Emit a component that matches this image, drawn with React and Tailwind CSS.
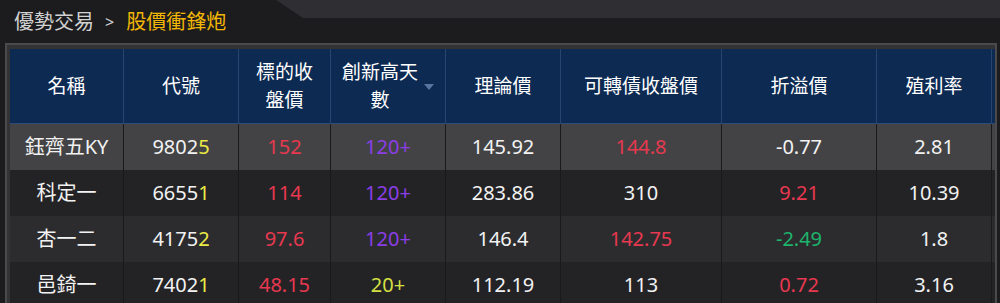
const FONT = "font-['Noto_Sans','Noto_Sans_CJK_TC',sans-serif]"

const cols = 'grid grid-cols-[114px_115px_92px_115px_115px_161px_155px_115px_3px]'

const headers = [
  { label: '名稱' },
  { label: '代號' },
  { label: '標的收盤價', lines: ['標的收', '盤價'] },
  { label: '創新高天數', lines: ['創新高天', '數'], sort: true },
  { label: '理論價' },
  { label: '可轉債收盤價' },
  { label: '折溢價' },
  { label: '殖利率' },
]

const RED = 'text-[#e8384f]'
const PURPLE = 'text-[#8b3ee6]'
const GREEN = 'text-[#1db46c]'
const YELLOW = 'text-[#ecea45]'
const WHITE = 'text-[#f2f2f2]'

const rows = [
  {
    bg: 'bg-[#434345]',
    name: '鈺齊五KY', code: '9802', codeEnd: '5',
    close: ['152', RED], days: ['120+', PURPLE], theo: '145.92',
    cb: ['144.8', RED], prem: ['-0.77', WHITE], yld: '2.81',
  },
  {
    bg: 'bg-[#232326]',
    name: '科定一', code: '6655', codeEnd: '1',
    close: ['114', RED], days: ['120+', PURPLE], theo: '283.86',
    cb: ['310', WHITE], prem: ['9.21', RED], yld: '10.39',
  },
  {
    bg: 'bg-[#2c2c2f]',
    name: '杏一二', code: '4175', codeEnd: '2',
    close: ['97.6', RED], days: ['120+', PURPLE], theo: '146.4',
    cb: ['142.75', RED], prem: ['-2.49', GREEN], yld: '1.8',
  },
  {
    bg: 'bg-[#232326]',
    name: '邑錡一', code: '7402', codeEnd: '1',
    close: ['48.15', RED], days: ['20+', 'text-[#d6e043]'], theo: '112.19',
    cb: ['113', WHITE], prem: ['0.72', RED], yld: '3.16',
  },
]

function HeaderCell({ h }) {
  return (
    <div className="h-[74px] border-r border-[#26456f] flex items-center justify-center gap-[6px] text-[19px] leading-[28px] text-white">
      {h.lines ? (
        <div className="flex flex-col items-center">
          {h.lines.map(l => <span key={l}>{l}</span>)}
        </div>
      ) : (
        <span>{h.label}</span>
      )}
      {h.sort && (
        <svg width="10" height="6" viewBox="0 0 10 6" className="mt-[2px]">
          <path d="M0 0H10L5 6Z" fill="#56759f" />
        </svg>
      )}
    </div>
  )
}

function Cell({ children, className = '' }) {
  return (
    <div className={`h-[46px] border-r border-[#19191b] flex items-center justify-center text-[20px] ${className}`}>
      {children}
    </div>
  )
}

export default function App() {
  return (
    <div className={`relative w-[1000px] h-[303px] overflow-hidden bg-[#1c1c1e] ${FONT}`}>
      {/* top tab decoration */}
      <div className="absolute top-0 left-[276px] w-[724px] h-[18px] bg-[#2e2e33] [clip-path:polygon(0_0,100%_0,100%_100%,27px_100%)]" />

      {/* breadcrumb */}
      <div className="relative h-[43px] flex items-center pl-[14px] text-[20px]">
        <span className="text-[#d2d2d2]">優勢交易</span>
        <span className="text-[#d2d2d2] ml-[11px] mr-[12px] text-[16px]">&gt;</span>
        <span className="text-[#f2b705]">股價衝鋒炮</span>
      </div>

      {/* table frame */}
      <div className="ml-[5px] mr-[3px] border-t-[2px] border-l-[2px] border-r-[2px] border-[#4a4a4c] bg-[#333336] pt-[4px] pl-[3px]">
        <div className={`${cols} bg-[#0d2a53] border-b border-[#2b4c78]`}>
          {headers.map(h => <HeaderCell key={h.label} h={h} />)}
          <div />
        </div>
        {rows.map(r => (
          <div key={r.name} className={`${cols} ${r.bg}`}>
            <Cell className={WHITE}>{r.name}</Cell>
            <Cell className={WHITE}>
              <span>{r.code}<span className={YELLOW}>{r.codeEnd}</span></span>
            </Cell>
            <Cell className={r.close[1]}>{r.close[0]}</Cell>
            <Cell className={r.days[1]}>{r.days[0]}</Cell>
            <Cell className={WHITE}>{r.theo}</Cell>
            <Cell className={r.cb[1]}>{r.cb[0]}</Cell>
            <Cell className={r.prem[1]}>{r.prem[0]}</Cell>
            <Cell className={WHITE}>{r.yld}</Cell>
            <div />
          </div>
        ))}
      </div>
    </div>
  )
}
